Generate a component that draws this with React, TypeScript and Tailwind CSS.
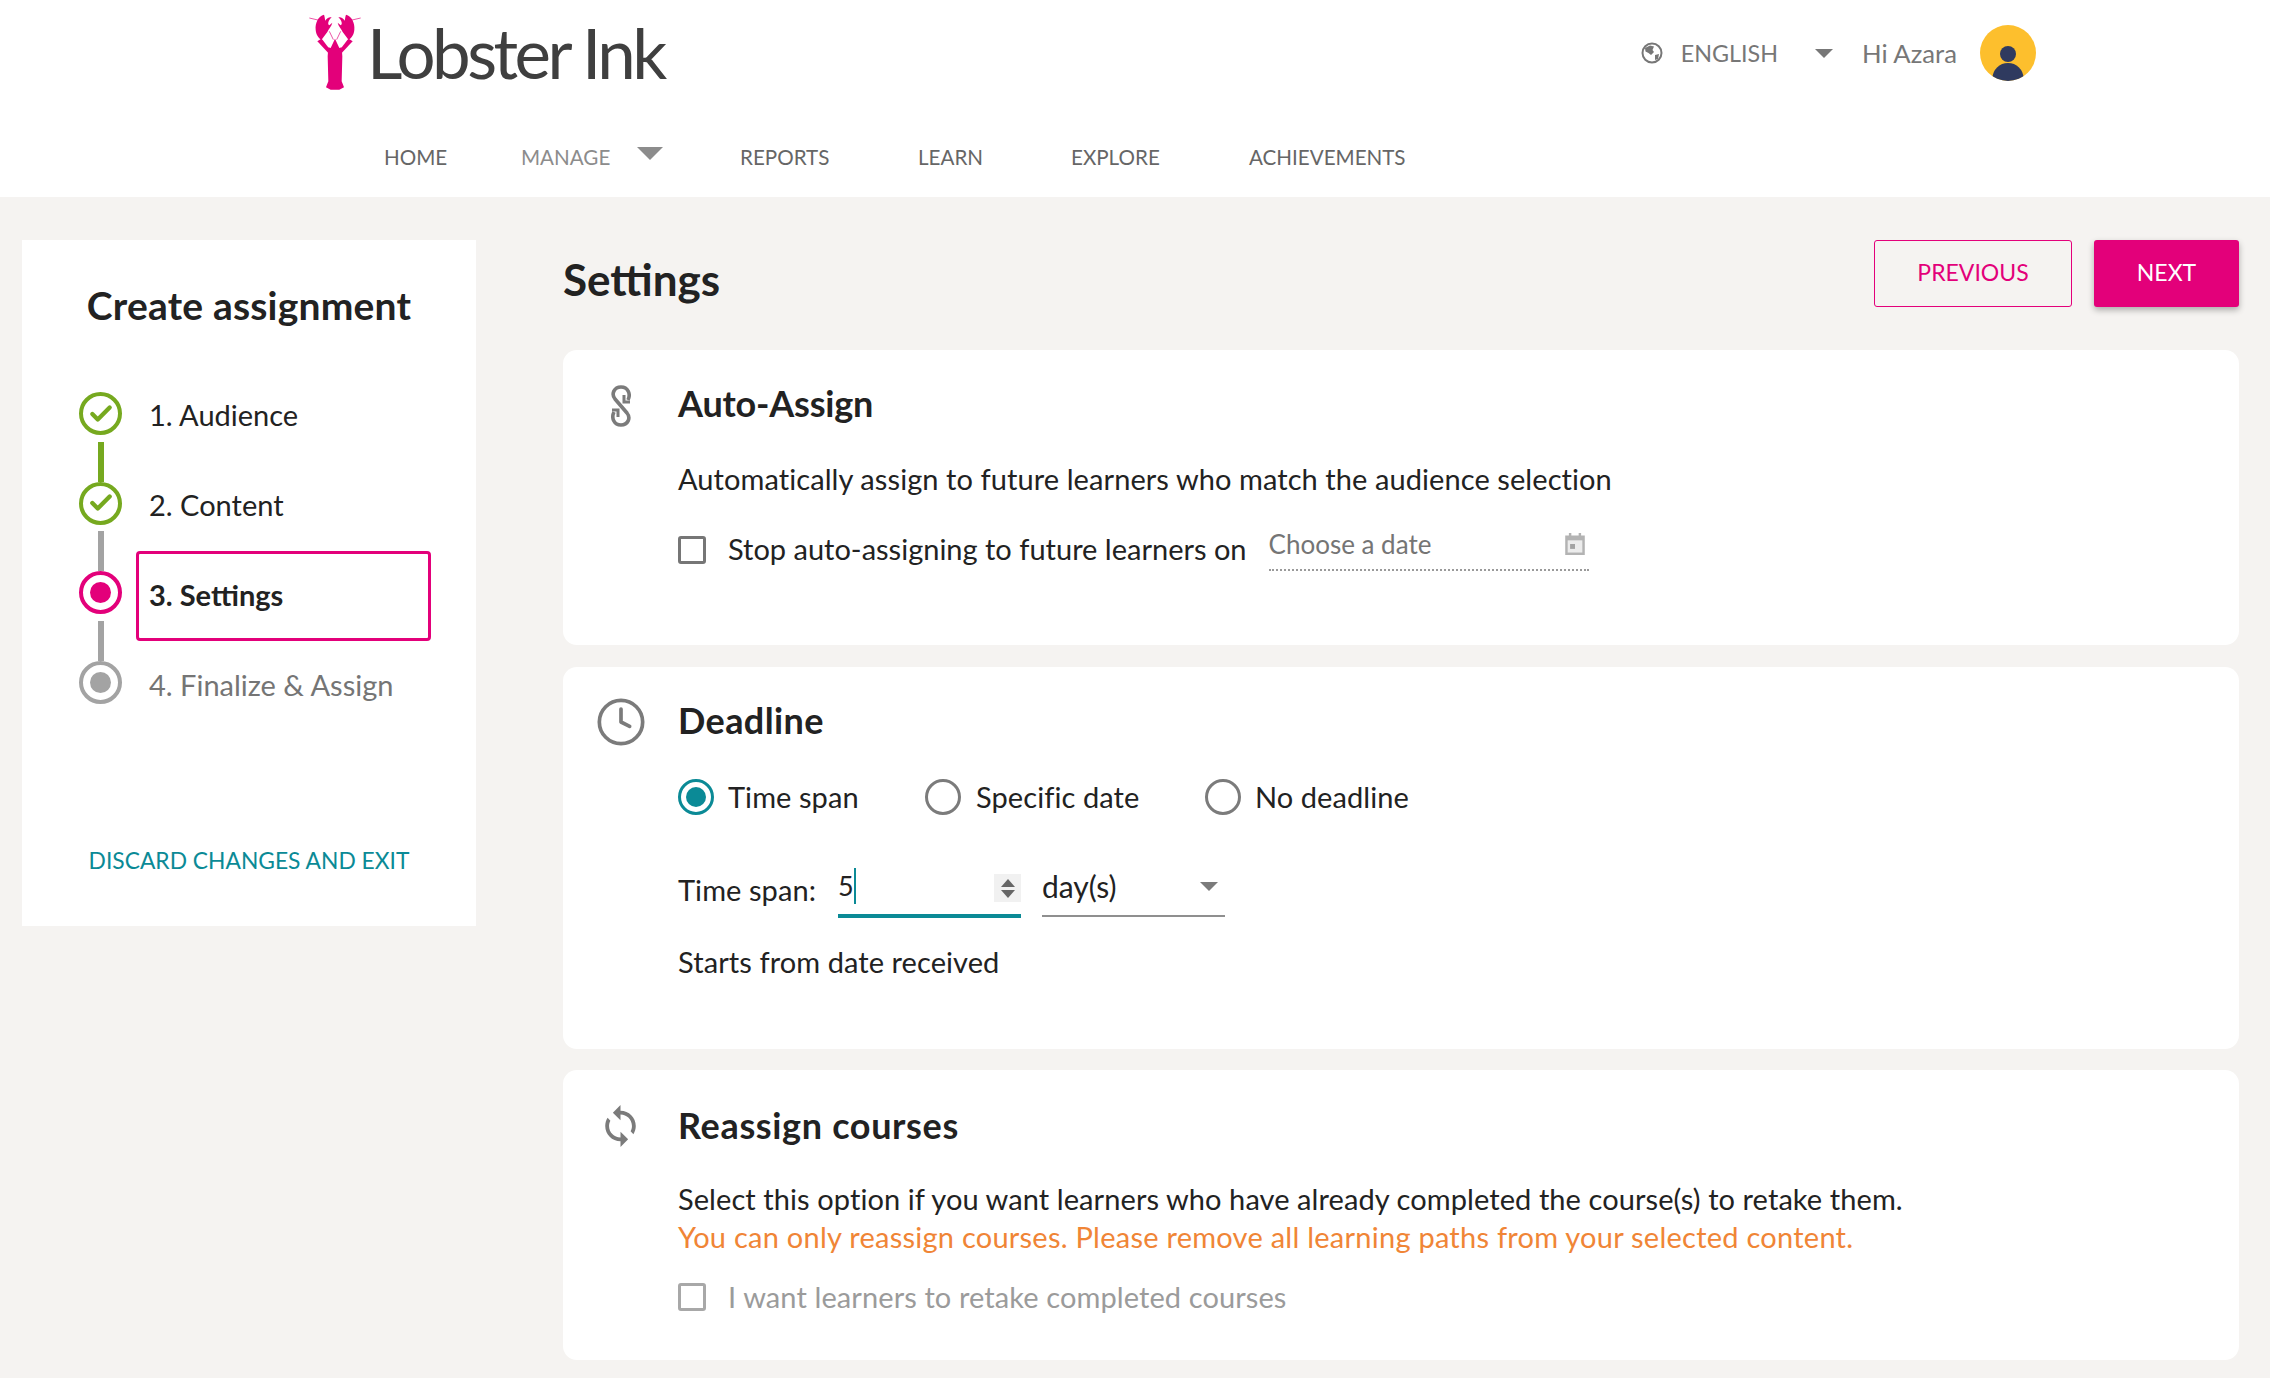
import React from 'react';
import { Check, Clock } from 'lucide-react';

const navItems = [
  { label: 'HOME', className: 'w-[137px] text-[#666666]' },
  { label: 'MANAGE', className: 'w-[219px] text-[#8c8c8c]', caret: true },
  { label: 'REPORTS', className: 'w-[178px] text-[#666666]' },
  { label: 'LEARN', className: 'w-[153px] text-[#666666]' },
  { label: 'EXPLORE', className: 'w-[178px] text-[#666666]' },
  { label: 'ACHIEVEMENTS', className: 'w-[170px] text-[#666666]' },
];

const LobsterClaw = () => (
  <>
    <path d="M72 20 C55 24 45 45 47 65 C48 80 56 90 64 96 L82 72 C86 62 95 55 97 44 L88 52 C82 50 84 38 95 28 C88 26 80 30 76 38 C74 30 74 24 72 20 Z" />
    <path d="M52 100 L64 92 L68 96 L88 122 L85 135 Z" />
    <path d="M58 37 L28 30" stroke="#e3007a" strokeWidth="2" fill="none" />
    <path d="M88 70 L100 95" stroke="#e3007a" strokeWidth="2" fill="none" />
  </>
);

const LobsterLogo = () => (
  <svg viewBox="0 0 210 270" className="h-[90px] w-[70px] shrink-0" fill="#e3007a">
    <path d="M92 120 L105 92 L118 120 L125 118 L127 145 L125 220 L132 238 L118 245 L92 245 L78 238 L85 220 L83 145 L85 118 Z" />
    <LobsterClaw />
    <g transform="translate(210 0) scale(-1 1)">
      <LobsterClaw />
    </g>
  </svg>
);

const Header = () => (
  <header className="h-[197px] bg-white">
    <div className="flex h-[106px] items-center pl-[300px] pr-[234px]">
      <LobsterLogo />
      <span className="mb-[2px] ml-[-3px] text-[69px] leading-none tracking-[-3.5px] text-[#3f3f3f]">
        Lobster Ink
      </span>
      <div className="ml-auto flex items-center text-[#777777]">
        <svg viewBox="0 0 22 22" className="h-[22px] w-[22px]">
          <circle cx="11" cy="11" r="9.5" fill="none" stroke="#777777" strokeWidth="2" />
          <path d="M4 6 L9 3.5 L13 4.5 L11.5 8 L13 10 L10 13 L7.5 11 L4.5 9.5 Z M14 13 L18 12 L17 17 L14 18 Z" fill="#777777" />
        </svg>
        <span className="ml-[18px] text-[23.3px]">ENGLISH</span>
        <span className="ml-[37px] h-0 w-0 border-x-[9px] border-t-[9px] border-x-transparent border-t-[#777777]" />
        <span className="ml-[29px] text-[25.7px]">Hi Azara</span>
        <svg viewBox="0 0 56 56" className="ml-[23px] h-[56px] w-[56px]">
          <clipPath id="avatar"><circle cx="28" cy="28" r="28" /></clipPath>
          <circle cx="28" cy="28" r="28" fill="#fdbf2d" />
          <g clipPath="url(#avatar)" fill="#2f3a5f">
            <circle cx="28" cy="29" r="8" />
            <ellipse cx="28" cy="53" rx="15.5" ry="15" />
          </g>
        </svg>
      </div>
    </div>
    <nav className="flex items-center pl-[384px] pt-[38px] text-[20.6px] leading-[26px]">
      {navItems.map(item => (
        <div key={item.label} className={`flex items-center ${item.className}`}>
          {item.label}
          {item.caret && (
            <span className="mb-[7px] ml-[27px] h-0 w-0 border-x-[13px] border-t-[13px] border-x-transparent border-t-[#8c8c8c]" />
          )}
        </div>
      ))}
    </nav>
  </header>
);

const steps = [
  { label: '1. Audience', state: 'done' },
  { label: '2. Content', state: 'done' },
  { label: '3. Settings', state: 'active' },
  { label: '4. Finalize & Assign', state: 'todo' },
];

const StepDot = ({ state }: { state: string }) => {
  if (state === 'done') {
    return (
      <div className="flex h-[43px] w-[43px] shrink-0 items-center justify-center rounded-full border-[4px] border-[#76a91f]">
        <Check className="h-[26px] w-[26px] text-[#76a91f]" strokeWidth={4} />
      </div>
    );
  }
  return (
    <div className={`flex h-[43px] w-[43px] shrink-0 items-center justify-center rounded-full border-[4px] ${state === 'active' ? 'border-[#e3007a]' : 'border-[#a3a3a3]'}`}>
      <div className={`h-[21px] w-[21px] rounded-full ${state === 'active' ? 'bg-[#e3007a]' : 'bg-[#a3a3a3]'}`} />
    </div>
  );
};

const Sidebar = () => (
  <aside className="flex h-[686px] w-[454px] shrink-0 flex-col bg-white">
    <h2 className="mt-[45px] text-center text-[39px] font-bold leading-[40px] tracking-[0.2px] text-[#222222]">Create assignment</h2>
    <div className="mt-[67px] flex pl-[57px]">
      <div className="flex w-[43px] flex-col items-center">
        {steps.map((step, index) => (
          <React.Fragment key={step.label}>
            <StepDot state={step.state} />
            {index < steps.length - 1 && (
              <div className={`mt-[6.5px] h-[40px] w-[6px] ${index === 0 ? 'bg-[#76a91f]' : 'bg-[#a3a3a3]'}`} />
            )}
          </React.Fragment>
        ))}
      </div>
      <div className="-mt-[21px] ml-[14px] flex w-[295px] flex-col text-[29px]">
        {steps.map(step => (
          <div
            key={step.label}
            className={`flex h-[90px] items-center pb-[2px] ${
              step.state === 'active'
                ? 'rounded-[4px] border-[3px] border-[#e3007a] pl-[10px] font-bold text-[#222222]'
                : step.state === 'todo'
                  ? 'pl-[13px] text-[#757575]'
                  : 'pl-[13px] text-[#222222]'
            }`}
          >
            {step.label}
          </div>
        ))}
      </div>
    </div>
    <div className="mt-[112px] text-center text-[22.8px] text-[#0b8a96]">DISCARD CHANGES AND EXIT</div>
  </aside>
);

const LinkIcon = () => (
  <svg viewBox="0 0 20 42" className="h-[42px] w-[20px]" fill="none" stroke="#7b7b7b" strokeWidth="3.6">
    <path d="M17 15 C20 9 17 2 10 2 C3 2 0 9 4 14 L16 28 C20 33 17 40 10 40 C3 40 0 33 3 27" />
    <path d="M13 10 L13 17 L19 17" strokeWidth="3" />
    <path d="M7 32 L7 25 L1 25" strokeWidth="3" />
  </svg>
);

const SyncIcon = () => (
  <svg viewBox="4 1 16 22" className="h-[42px] w-[31px]" fill="#7b7b7b">
    <path d="M12 4V1L8 5l4 4V6c3.31 0 6 2.69 6 6 0 1.01-.25 1.97-.7 2.8l1.46 1.46C19.54 15.03 20 13.57 20 12c0-4.42-3.58-8-8-8zm0 14c-3.31 0-6-2.69-6-6 0-1.01.25-1.97.7-2.8L5.24 7.74C4.46 8.97 4 10.43 4 12c0 4.42 3.58 8 8 8v3l4-4-4-4v3z" />
  </svg>
);

const CheckBox = ({ muted }: { muted?: boolean }) => (
  <span className={`h-[28px] w-[28px] shrink-0 rounded-[3px] border-[3px] ${muted ? 'border-[#a8a8a8]' : 'border-[#767676]'}`} />
);

const Radio = ({ on }: { on?: boolean }) => (
  <span className={`flex h-[36px] w-[36px] shrink-0 items-center justify-center rounded-full border-[3px] ${on ? 'border-[#0b8a96]' : 'border-[#7b7b7b]'}`}>
    {on && <span className="h-[20px] w-[20px] rounded-full bg-[#0b8a96]" />}
  </span>
);

const Card = ({ icon, title, className, iconClassName, titleClassName, children }: { icon: React.ReactNode; title: string; className: string; iconClassName: string; titleClassName: string; children: React.ReactNode }) => (
  <section className={`flex rounded-[14px] bg-white ${className}`}>
    <div className={`flex h-[40px] w-[115px] shrink-0 items-center justify-center ${iconClassName}`}>{icon}</div>
    <div className="flex-1">
      <h3 className={`text-[36px] font-bold leading-[40px] text-[#222222] ${titleClassName}`}>{title}</h3>
      {children}
    </div>
  </section>
);

const bodyText = 'text-[29px] leading-[40px] tracking-[0.08px] text-[#222222]';

const App = () => (
  <div className="min-h-[1378px] bg-[#f5f3f1] [font-family:Lato,sans-serif]">
    <Header />
    <div className="flex items-start pl-[22px] pr-[31px] pt-[43px]">
      <Sidebar />
      <main className="ml-[87px] flex-1">
        <div className="flex h-[67px] items-center">
          <h1 className="mt-[10px] text-[44px] font-bold text-[#222222]">Settings</h1>
          <button className="ml-auto h-[67px] w-[198px] rounded-[3px] border-[1.5px] border-[#e3007a] pb-[2px] text-[23px] text-[#e3007a]">PREVIOUS</button>
          <button className="ml-[22px] h-[67px] w-[145px] rounded-[3px] bg-[#e3007a] pb-[2px] text-[23px] text-white shadow-[0_3px_6px_rgba(0,0,0,0.3)]">NEXT</button>
        </div>

        <Card icon={<LinkIcon />} title="Auto-Assign" iconClassName="mt-[3px]" titleClassName="tracking-[-0.2px]" className="mt-[43px] h-[295px] pt-[33px]">
          <p className={`mt-[36px] ${bodyText}`}>Automatically assign to future learners who match the audience selection</p>
          <div className="mt-[30px] flex items-center">
            <CheckBox />
            <span className="mb-[2px] ml-[22px] text-[29px] leading-[40px] text-[#222222]">Stop auto-assigning to future learners on</span>
            <div className="ml-[22px] flex h-[42px] w-[320px] items-center justify-between border-b-2 border-dotted border-[#9a9a9a] pb-[10px] pr-[4px] text-[26px] text-[#757575]">
              Choose a date
              <svg viewBox="2 1 16 18" className="h-[22px] w-[20px]">
                <path d="M2 3h3V1h2v2h6V1h2v2h3v16H2z" fill="#b3b3b3" />
                <rect x="4" y="7" width="12" height="10" fill="#ececec" />
                <rect x="6" y="10" width="4" height="4" fill="#a3a3a3" />
              </svg>
            </div>
          </div>
        </Card>

        <Card icon={<Clock className="h-[52px] w-[52px] text-[#7b7b7b]" strokeWidth={1.7} />} title="Deadline" iconClassName="mt-[2px]" titleClassName="tracking-[0.4px]" className="mt-[22px] h-[382px] pt-[33px]">
          <div className="mt-[37px] flex items-center">
            <Radio on />
            <span className={`ml-[14px] w-[197px] ${bodyText}`}>Time span</span>
            <Radio />
            <span className={`ml-[15px] w-[229px] ${bodyText}`}>Specific date</span>
            <Radio />
            <span className={`ml-[14px] ${bodyText}`}>No deadline</span>
          </div>
          <div className="mt-[51px] flex items-start">
            <span className={`mt-[2px] w-[160px] ${bodyText}`}>Time span:</span>
            <div className="flex h-[50px] w-[183px] items-start justify-between border-b-4 border-[#0b8a96]">
              <span className="border-r-2 border-[#0b8a96] text-[27px] leading-[36px] text-[#222222]">5</span>
              <span className="mt-[6px] flex h-[28px] w-[27px] flex-col items-center justify-center gap-[3px] bg-[#f1f1f1]">
                <span className="h-0 w-0 border-x-[7px] border-b-[8px] border-x-transparent border-b-[#666666]" />
                <span className="h-0 w-0 border-x-[7px] border-t-[8px] border-x-transparent border-t-[#666666]" />
              </span>
            </div>
            <div className="ml-[21px] flex h-[49px] w-[183px] items-start justify-between border-b-2 border-[#8f8f8f] pr-[7px]">
              <span className="text-[30px] leading-[36px] text-[#222222]">day(s)</span>
              <span className="mt-[14px] h-0 w-0 border-x-[9px] border-t-[9px] border-x-transparent border-t-[#7b7b7b]" />
            </div>
          </div>
          <p className={`mt-[24px] ${bodyText}`}>Starts from date received</p>
        </Card>

        <Card icon={<SyncIcon />} title="Reassign courses" iconClassName="mt-[1px]" titleClassName="tracking-[0.65px]" className="mt-[21px] h-[290px] pt-[35px]">
          <p className={`mt-[34px] ${bodyText}`}>Select this option if you want learners who have already completed the course(s) to retake them.</p>
          <p className="text-[29px] leading-[36px] tracking-[0.25px] text-[#f08536]">You can only reassign courses. Please remove all learning paths from your selected content.</p>
          <div className="mt-[22px] flex items-center">
            <CheckBox muted />
            <span className="ml-[22px] text-[29px] leading-[40px] tracking-[0.1px] text-[#9b9b9b]">I want learners to retake completed courses</span>
          </div>
        </Card>
      </main>
    </div>
  </div>
);

export default App;
